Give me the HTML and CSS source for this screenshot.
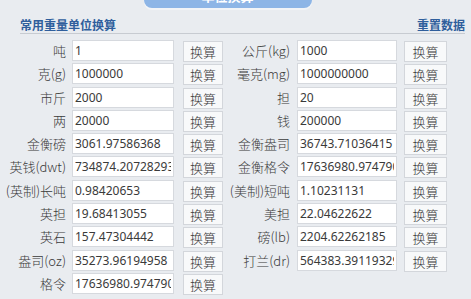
FILE: index.html
```html
<!DOCTYPE html>
<html lang="zh">
<head>
<meta charset="utf-8">
<link rel="stylesheet" href="styles.css">
</head>
<body>
<div class="page">
  <div class="tabbar"><div class="tab"><span>单位换算</span></div></div>
  <div class="head">
    <span class="title">常用重量单位换算</span>
    <span class="reset">重置数据</span>
  </div>
  <div class="grid">
    <label class="lab l1">吨</label><input class="inp" value="1"><div class="bc"><button class="btn">换算</button></div>
    <label class="lab l2">公斤(kg)</label><input class="inp i2" value="1000"><div class="bc b2"><button class="btn">换算</button></div>

    <label class="lab l1">克(g)</label><input class="inp" value="1000000"><div class="bc"><button class="btn">换算</button></div>
    <label class="lab l2">毫克(mg)</label><input class="inp i2" value="1000000000"><div class="bc b2"><button class="btn">换算</button></div>

    <label class="lab l1">市斤</label><input class="inp" value="2000"><div class="bc"><button class="btn">换算</button></div>
    <label class="lab l2">担</label><input class="inp i2" value="20"><div class="bc b2"><button class="btn">换算</button></div>

    <label class="lab l1">两</label><input class="inp" value="20000"><div class="bc"><button class="btn">换算</button></div>
    <label class="lab l2">钱</label><input class="inp i2" value="200000"><div class="bc b2"><button class="btn">换算</button></div>

    <label class="lab l1">金衡磅</label><input class="inp" value="3061.97586368"><div class="bc"><button class="btn">换算</button></div>
    <label class="lab l2">金衡盎司</label><input class="inp i2" value="36743.71036415"><div class="bc b2"><button class="btn">换算</button></div>

    <label class="lab l1">英钱(dwt)</label><input class="inp" value="734874.20728293"><div class="bc"><button class="btn">换算</button></div>
    <label class="lab l2">金衡格令</label><input class="inp i2" value="17636980.974790"><div class="bc b2"><button class="btn">换算</button></div>

    <label class="lab l1">(英制)长吨</label><input class="inp" value="0.98420653"><div class="bc"><button class="btn">换算</button></div>
    <label class="lab l2">(美制)短吨</label><input class="inp i2" value="1.10231131"><div class="bc b2"><button class="btn">换算</button></div>

    <label class="lab l1">英担</label><input class="inp" value="19.68413055"><div class="bc"><button class="btn">换算</button></div>
    <label class="lab l2">美担</label><input class="inp i2" value="22.04622622"><div class="bc b2"><button class="btn">换算</button></div>

    <label class="lab l1">英石</label><input class="inp" value="157.47304442"><div class="bc"><button class="btn">换算</button></div>
    <label class="lab l2">磅(lb)</label><input class="inp i2" value="2204.62262185"><div class="bc b2"><button class="btn">换算</button></div>

    <label class="lab l1">盎司(oz)</label><input class="inp" value="35273.96194958"><div class="bc"><button class="btn">换算</button></div>
    <label class="lab l2">打兰(dr)</label><input class="inp i2" value="564383.39119329"><div class="bc b2"><button class="btn">换算</button></div>

    <label class="lab l1">格令</label><input class="inp" value="17636980.974790"><div class="bc"><button class="btn">换算</button></div>
  </div>
</div>
</body>
</html>
```

FILE: styles.css
```css
html, body {
  margin: 0;
  padding: 0;
  background: #e9ecf0;
}
body {
  width: 471px;
  height: 299px;
  overflow: hidden;
  font-family: "Noto Sans", "Noto Sans CJK SC", sans-serif;
  color: #3a3a3a;
}
.page {
  width: 471px;
}
.tabbar {
  height: 12px;
  display: flex;
  justify-content: center;
}
.tab {
  width: 168px;
  height: 8px;
  margin-left: -16px;
  background: #8db5e6;
  border-radius: 0 0 14px 14px;
  overflow: hidden;
  display: flex;
  justify-content: center;
  color: #fff;
  font-size: 13px;
  font-weight: bold;
  line-height: 13px;
  box-shadow: 0 2px 0 #f2f4f7;
}
.tab span {
  margin-top: -10px;
}
.head {
  margin: 0 6px 0 20px;
  height: 21px;
  border-bottom: 1px solid #c7cbd1;
  display: flex;
  justify-content: space-between;
  align-items: center;
  font-size: 12px;
  font-weight: bold;
  color: #2f5e9c;
  font-family: "Noto Sans CJK SC", sans-serif;
}
.head span {
  padding-top: 3px;
}
.grid {
  margin: 6px 0 0 4px;
  display: grid;
  grid-template-columns: 68px 102px 49px 74px 100px 50px;
  grid-auto-rows: 21px;
  row-gap: 2.3px;
}
.lab {
  font-size: 13px;
  line-height: 21px;
  text-align: right;
  white-space: nowrap;
  font-family: "Noto Sans CJK SC", sans-serif;
  font-weight: 300;
  color: #3a3a3a;
}
.l1 {
  padding-right: 6px;
}
.l2 {
  padding-right: 7px;
}
.inp {
  box-sizing: border-box;
  width: 100%;
  height: 21px;
  margin: 0;
  border: 1px solid #d6d9de;
  background: #fff;
  padding: 0 2px;
  font-family: "Noto Sans", "Noto Sans CJK SC", sans-serif;
  font-size: 12px;
  color: #3a3a3a;
  outline: none;
}
.bc {
  padding-left: 9px;
}
.b2 {
  padding-left: 7px;
}
.btn {
  box-sizing: border-box;
  width: 100%;
  height: 21px;
  margin: 0;
  padding: 0;
  border: 1px solid #d3d6db;
  background: #f8f9fa;
  font-family: "Noto Sans CJK SC", sans-serif;
  font-weight: 300;
  font-size: 13px;
  color: #3a3a3a;
}
```
